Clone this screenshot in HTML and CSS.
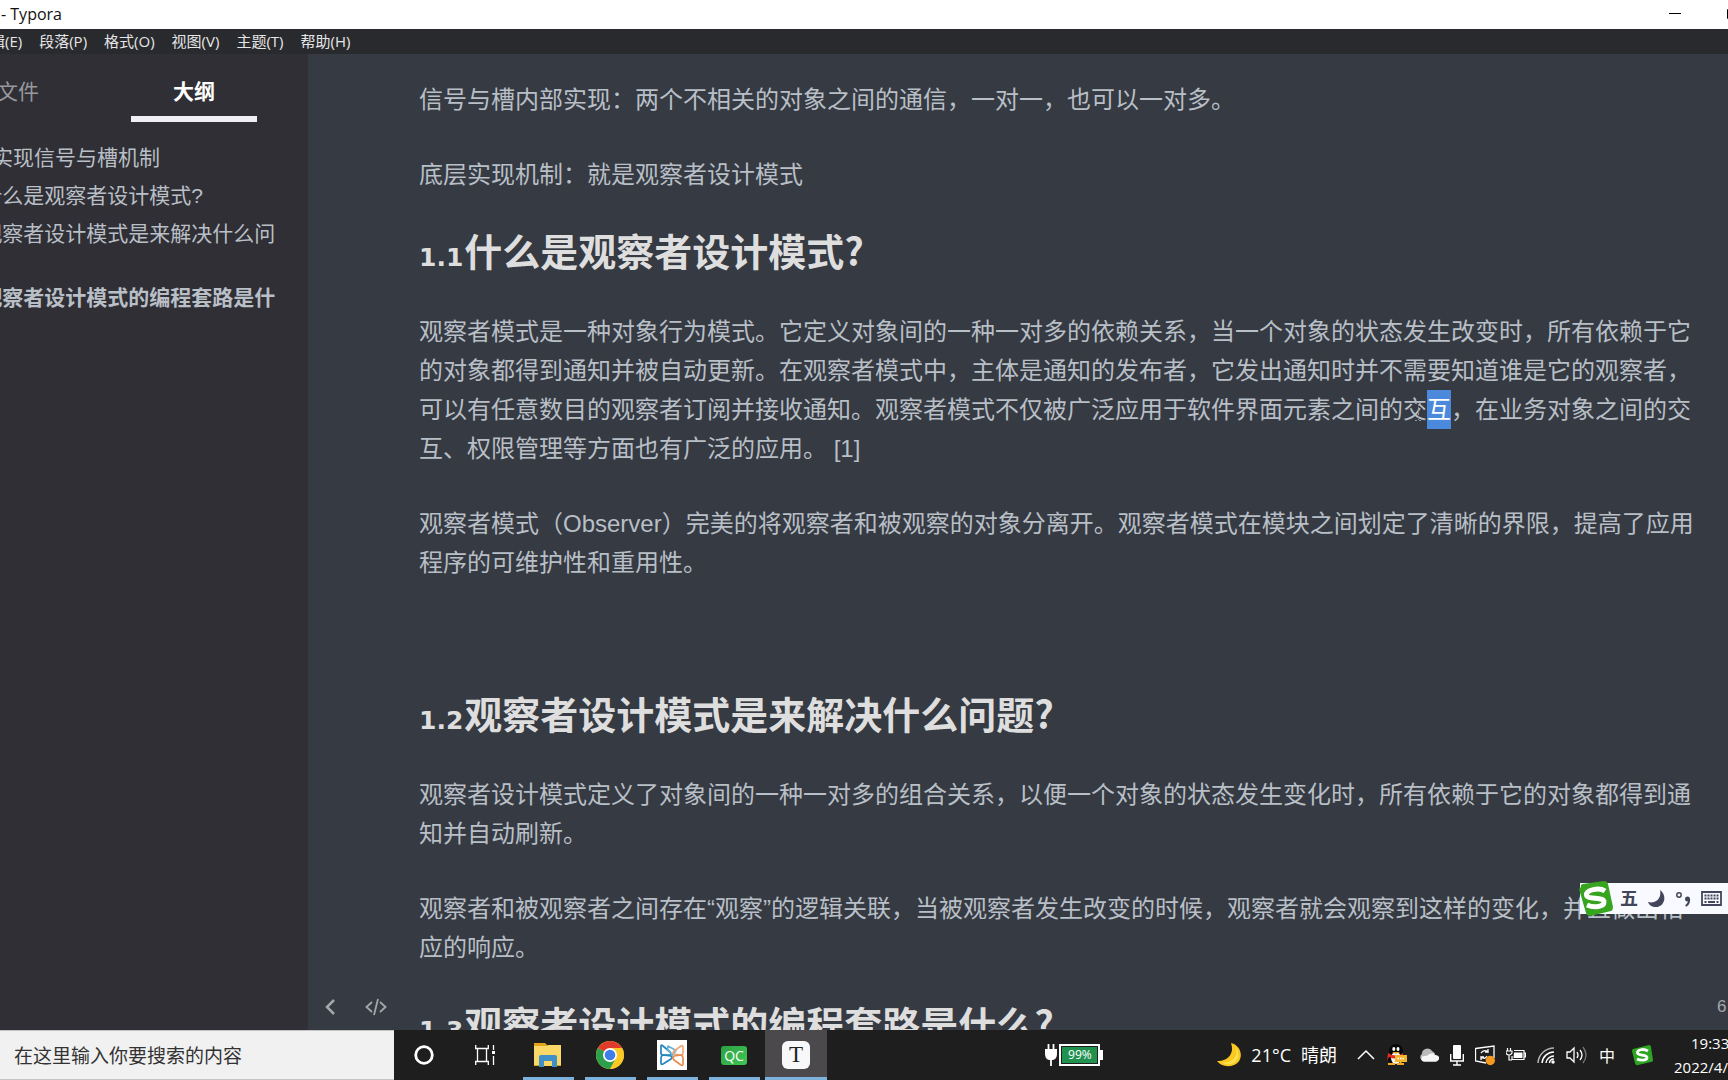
FILE: index.html
```html
<!DOCTYPE html>
<html lang="zh-CN">
<head>
<meta charset="utf-8">
<title>Typora</title>
<link rel="stylesheet" href="styles.css">
</head>
<body>
<div class="desktop">
  <header class="titlebar">
    <span>- Typora</span>
    <div class="window-controls">
      <button class="window-button" aria-label="最小化"><svg width="12" height="12" viewBox="0 0 12 12"><path d="M0 5.5h12" stroke="#000"/></svg></button>
      <button class="window-button" aria-label="最大化"><svg width="12" height="12" viewBox="0 0 12 12"><path d="M.5 1.5h10v9H.5z" fill="none" stroke="#000"/></svg></button>
    </div>
  </header>
  <nav class="menubar">
    <button>编辑(E)</button><button>段落(P)</button><button>格式(O)</button><button>视图(V)</button><button>主题(T)</button><button>帮助(H)</button>
  </nav>
  <div class="workspace">
    <aside class="sidebar">
      <div class="tabs">
        <button class="tab">文件</button>
        <button class="tab tab-active">大纲</button>
      </div>
      <nav class="outline">
        <a class="outline-root" href="#signal">实现信号与槽机制</a>
        <a href="#s11">1.1什么是观察者设计模式?</a>
        <a href="#s12">1.2观察者设计模式是来解决什么问题?</a>
        <a class="outline-current" href="#s13">1.3观察者设计模式的编程套路是什么?</a>
      </nav>
    </aside>
    <main class="editor">
      <article class="document">
        <p id="signal">信号与槽内部实现：两个不相关的对象之间的通信，一对一，也可以一对多。</p>
        <p>底层实现机制：就是观察者设计模式</p>
        <h2 id="s11"><span class="number">1.1</span>什么是观察者设计模式?</h2>
        <p>观察者模式是一种对象行为模式。它定义对象间的一种一对多的依赖关系，当一个对象的状态发生改变时，所有依赖于它的对象都得到通知并被自动更新。在观察者模式中，主体是通知的发布者，它发出通知时并不需要知道谁是它的观察者，可以有任意数目的观察者订阅并接收通知。观察者模式不仅被广泛应用于软件界面元素之间的交<mark>互</mark>，在业务对象之间的交互、权限管理等方面也有广泛的应用。 [1]</p>
        <p>观察者模式（Observer）完美的将观察者和被观察的对象分离开。观察者模式在模块之间划定了清晰的界限，提高了应用程序的可维护性和重用性。</p>
        <p class="blank"></p>
        <h2 id="s12"><span class="number">1.2</span>观察者设计模式是来解决什么问题?</h2>
        <p>观察者设计模式定义了对象间的一种一对多的组合关系，以便一个对象的状态发生变化时，所有依赖于它的对象都得到通知并自动刷新。</p>
        <p>观察者和被观察者之间存在“观察”的逻辑关联，当被观察者发生改变的时候，观察者就会观察到这样的变化，并且做出相应的响应。</p>
        <h2 id="s13"><span class="number">1.3</span>观察者设计模式的编程套路是什么?</h2>
      </article>
      <div class="statusbar">
        <button aria-label="收起侧边栏"><svg width="12" height="16" viewBox="0 0 12 16"><path d="M10 1 3 8l7 7" fill="none" stroke="#a3a8ad" stroke-width="2.5"/></svg></button>
        <button aria-label="源代码模式"><svg width="22" height="18" viewBox="0 0 22 18"><path d="M7 4 1.500 9 7 14M15 4l5.500 5-5.500 5M13 1 9 17" fill="none" stroke="#a3a8ad" stroke-width="1.800"/></svg></button>
        <span class="word-count">6</span>
      </div>
      <div class="ime">
        <svg class="ime-logo" width="38" height="36" viewBox="0 0 38 36"><path d="M4 6Q3 4 6 3L27 0Q30 0 31 3L36 26Q36 29 34 30L13 35Q10 35 9 32L2 8Z" fill="#36a41e"/><path d="M28 10C22 6 9 9 9.500 14 10 19 27 15.500 27 21 27 26 17 27 10 24" fill="none" stroke="#fff" stroke-width="5"/></svg>
        <span class="ime-mode">五</span>
        <svg width="18" height="18" viewBox="0 0 18 18"><path d="M12 0C20 6 16 17 8 17 4 17 1 15 0 12 7 14 14 9 12 0Z" fill="#43465a"/></svg>
        <svg width="15" height="16" viewBox="0 0 15 16"><circle cx="3" cy="4" r="2.200" fill="none" stroke="#43465a" stroke-width="1.500"/><circle cx="11.500" cy="8" r="2.500" fill="#43465a"/><path d="M13.200 8q0 5-3.500 7" fill="none" stroke="#43465a" stroke-width="2"/></svg>
        <svg width="21" height="15" viewBox="0 0 21 15"><path d="M1 1h19v13H1z" fill="none" stroke="#43465a" stroke-width="1.800"/><path d="M3.500 4.500h14M3.500 7.500h14" stroke="#43465a" stroke-width="2" stroke-dasharray="2 1"/><path d="M3.500 11h2M7 11h7M15.500 11h2" stroke="#43465a" stroke-width="2"/></svg>
      </div>
      <svg class="caret" width="7" height="18" viewBox="0 0 7 18"><path d="M0 .5h3M4 .5h3M3.500 1v16M0 17.500h3M4 17.500h3" stroke="#8f969d" stroke-dasharray="2 1"/></svg>
    </main>
  </div>
  <footer class="taskbar">
    <input class="search" type="text" placeholder="在这里输入你要搜索的内容" aria-label="搜索">
    <button class="task cortana" aria-label="Cortana"><svg width="22" height="22" viewBox="0 0 22 22"><circle cx="11" cy="11" r="8.300" fill="none" stroke="#fff" stroke-width="2.800"/></svg></button>
    <button class="task taskview" aria-label="任务视图"><svg width="21" height="20" viewBox="0 0 21 20"><path d="M.7 0v3.500h12.600V0M.7 20v-3.500h12.600V20M2.500 3.500v13M11.500 3.500v13M18.500 0v5M18.500 11v9" fill="none" stroke="#fff" stroke-width="1.300"/><path d="M17 6h3v3h-3z" fill="#fff"/></svg></button>
    <button class="task running" aria-label="文件资源管理器"><svg width="28" height="26" viewBox="0 0 28 26"><path d="M0 1h11l3 3H0z" fill="#e2a61b"/><path d="M0 4h13l1-1h13v21H0z" fill="#f9d868"/><path d="M5 25V15q0-2 2-2h14q2 0 2 2v10h-5v-6h-8v6z" fill="#3f8fc9"/><path d="M0 23h5v1H0zM23 23h4v1h-4z" fill="#e2a61b"/></svg></button>
    <button class="task running" aria-label="Chrome"><svg width="28" height="28" viewBox="0 0 28 28"><circle cx="14" cy="14" r="14" fill="#fbc926"/><path d="M14 14 1.900 7A14 14 0 0 1 26.100 7z" fill="#df3b2d"/><path d="M14 14 1.900 7A14 14 0 0 0 14 28l6-10.500z" fill="#2b9f4c"/><path d="M14 7h12.100A14 14 0 0 1 14 28l6-10.500z" fill="#fbc926"/><circle cx="14" cy="14" r="7" fill="#fff"/><circle cx="14" cy="14" r="5.300" fill="#3f7de8"/></svg></button>
    <button class="task running" aria-label="VMware"><svg width="30" height="30" viewBox="0 0 30 30"><path d="M0 0h30v30H0z" fill="#fff"/><g fill="none" stroke-width="1.700" stroke-linejoin="round"><path d="M4 6Q4 4 6 6l7 6q2 2 0 3H6q-2 0-2-2z" stroke="#2484bd"/><path d="M4 18q0-2 2-3l8 1q2 1 0 3l-8 5q-2 1-2-1z" stroke="#2484bd"/><path d="M11 6 19 10.500 15.500 15 10.500 10z" stroke="#65b3d8"/><path d="M26 7q0-2-2-1l-7 5q-2 2 0 3l7 1q2 0 2-2z" stroke="#f0a878"/><path d="M26 18q0-2-2-3l-7 1q-2 2 0 4l7 5q2 1 2-1z" stroke="#e98b4c"/></g></svg></button>
    <button class="task running" aria-label="Qt Creator"><span class="qc">QC</span></button>
    <button class="task running task-active" aria-label="Typora"><span class="typora">T</span></button>

    <div class="power">
      <svg width="12" height="22" viewBox="0 0 12 22"><path d="M3.500 0v6M8.500 0v6M6 14v8" stroke="#fff" stroke-width="1.800"/><path d="M0 5h12v5q0 5-4 6H4q-4-1-4-6z" fill="#fff"/></svg>
      <span class="charge">99%</span>
    </div>
    <div class="weather">
      <svg width="24" height="24" viewBox="0 0 24 24"><path d="M14 0C26 3 27 18 17 22 10 25 3 22 0 18 10 19 18 11 14 0Z" fill="#fbc81f"/><path d="M17 3C24 12 14 22 4 19 14 27 29 14 17 3Z" fill="#ffe04f"/></svg>
      <span>21°C</span><span>晴朗</span>
    </div>
    <div class="tray">
      <svg width="18" height="12" viewBox="0 0 18 12"><path d="m1 10 8-8 8 8" fill="none" stroke="#fff" stroke-width="1.500"/></svg>
      <svg width="22" height="22" viewBox="0 0 22 22"><ellipse cx="10" cy="7" rx="7" ry="7" fill="#080808"/><ellipse cx="9.500" cy="14" rx="8" ry="6" fill="#080808"/><ellipse cx="10" cy="14" rx="5" ry="6" fill="#f4f4f4"/><path d="M2 9q8 5 15 0v4q-8 3-14 0l-2 4z" fill="#df2c24"/><ellipse cx="7.800" cy="5" rx="1.500" ry="2" fill="#fff"/><ellipse cx="12" cy="5" rx="1.500" ry="2" fill="#fff"/><path d="M6 8h8l-4 2z" fill="#f4a91d"/><path d="M2 19h7v2H2zM11 19h7v2h-7z" fill="#f4a91d"/><path d="M9 11h12v7h-5l-2 2v-2H9z" fill="#f7b52c"/><path d="M11.500 14.500h7" stroke="#fff" stroke-width="1.500" stroke-dasharray="1.500 1"/></svg>
      <svg width="20" height="14" viewBox="0 0 21 14"><path d="M4 13a4 4 0 0 1-1-7A6 6 0 0 1 14 3a6 6 0 0 1 3 3L5 13z" fill="#b9b9b9"/><path d="M5 14a3 3 0 0 1 1-6q3 0 5-2 4-2 6 1c6 0 5 7 0 7z" fill="#f5f5f5"/></svg>
      <svg width="14" height="21" viewBox="0 0 14 21"><rect x="3" y="0" width="8" height="14" rx="1" fill="#fff"/><path d="M.7 9v7h12.600V9M7 16v4M3 20h8" fill="none" stroke="#fff" stroke-width="1.400"/></svg>
      <svg width="20" height="22" viewBox="1 0 20 22"><path d="M1.500 4.500 20 2v12M1.500 4v13l10.500 2" fill="none" stroke="#fff" stroke-width="1.300"/><path d="M7 9q3-4 7-1V5M14 8h-3M13 12q-2 4-6 1v3M7 13h3" fill="none" stroke="#fff" stroke-width="1.300"/><circle cx="16.300" cy="16.500" r="4.700" fill="#f6991f"/></svg>
      <svg width="20" height="14" viewBox="0 0 20 14"><path d="M1.500 0v3M4.500 0v3M0 3h6v2q-1 2-3 2-2 0-3-2zM3 7v5h3M8 2.500h10v9H6V8M18 5h1.500v4H18" fill="none" stroke="#fff" stroke-width="1.200"/><path d="M8 4.500h8.500V10H7.500z" fill="#fff"/></svg>
      <svg width="18" height="18" viewBox="0 0 18 18"><g fill="none" stroke-width="1.500"><path d="M1 17A16 16 0 0 1 17 2" stroke="#b5b5b5"/><path d="M5 17A12 12 0 0 1 17 6M9 17a8 8 0 0 1 8-7M12.500 17a4 4 0 0 1 4.500-4" stroke="#fff"/></g><circle cx="16" cy="16" r="1.700" fill="#fff"/></svg>
      <svg width="22" height="18" viewBox="0 0 22 18"><path d="M1 6h3l4-4v14l-4-4H1z" fill="none" stroke="#fff" stroke-width="1.300"/><path d="M11 6q2 3 0 6M14 4q4 5 0 10" fill="none" stroke="#fff" stroke-width="1.300"/><path d="M17 1q6 8 0 16" fill="none" stroke="#777" stroke-width="1.300"/></svg>
      <span class="input-mode">中</span>
      <svg class="sogou" width="21" height="21" viewBox="0 0 21 21"><path d="M1 4 17 0q2 0 2 2l2 13q0 2-2 2L6 20q-2 1-3-2L0 6q0-1 1-2z" fill="#2da522"/><path d="M16 6C11 3 5 5 5.500 8 6 11 15 9 15 12.500 15 15.500 9 16 5 14" fill="none" stroke="#fff" stroke-width="2.800"/></svg>
    </div>
    <div class="clock"><span class="time">19:33</span><span>2022/4/</span></div>
  </footer>
</div>
</body>
</html>
```
FILE: styles.css
```css
* { box-sizing: border-box; }

body {
  margin: 0;
  overflow: hidden;
  font-family: "Liberation Sans", "Noto Sans CJK SC", sans-serif;
}

button {
  margin: 0;
  padding: 0;
  border: 0;
  background: none;
  color: inherit;
  font: inherit;
}

svg { display: block; flex: none; }

.desktop {
  display: flex;
  flex-direction: column;
  height: 100vh;
  overflow: hidden;
}

.titlebar {
  display: flex;
  flex: none;
  align-items: center;
  justify-content: space-between;
  height: 29px;
  padding: 0 0 2px 1px;
  background: #fff;
  color: #111;
  font: 16px/26px "Open Sans", "Noto Sans CJK SC", sans-serif;
}

.window-controls {
  display: flex;
  gap: 46px;
  margin-right: -11px;
}

.menubar {
  display: flex;
  flex: none;
  gap: 17px;
  height: 25px;
  margin-left: -25px;
  background: #292a2d;
  color: #e6e6e8;
  font: 15px/25px "Open Sans", "Noto Sans CJK SC", sans-serif;
}

.menubar button { white-space: nowrap; }

.workspace {
  display: flex;
  flex: 1;
  min-height: 0;
}

.sidebar {
  flex: none;
  width: 404px;
  margin-left: -96px;
  background: #302f35;
  color: #b8bfc6;
  font-size: 21px;
}

.tabs {
  display: flex;
  padding: 8px 26px 0;
}

.tab {
  flex: 1;
  margin: 0 25px;
  padding-top: 6px;
  height: 60px;
  border-bottom: 6px solid transparent;
  color: #98989d;
  line-height: 48px;
}

.tab-active {
  border-color: #efeff4;
  color: #fff;
  font-weight: bold;
}

.outline {
  display: flex;
  flex-direction: column;
  padding: 17px 26px 0 48px;
}

.outline a {
  padding: 6px 0;
  color: inherit;
  line-height: 26px;
  text-decoration: none;
}

.outline .outline-root { padding-left: 40px; }

.outline-current { font-weight: bold; }

.editor {
  position: relative;
  flex: 1;
  min-width: 0;
  overflow: hidden;
  background: #363a42;
  color: #b8bfc6;
}

.document {
  padding: 26px 29px 0 111px;
  font-size: 24px;
  line-height: 39px;
}

.document p { margin: 0 0 36px; }

.blank { height: 39px; }

.document h2 {
  margin: 0 0 42px;
  color: #dedede;
  font: bold 38px/39px "Noto Sans CJK SC", sans-serif;
}

.number {
  margin-right: 1px;
  font-family: "DejaVu Sans", sans-serif;
  font-size: 25px;
  line-height: 25px;
}

mark {
  display: inline-block;
  background: #4a89dc;
  color: #fff;
}

.statusbar {
  position: absolute;
  right: 0;
  bottom: 10px;
  left: 0;
  display: flex;
  align-items: center;
  gap: 29px;
  height: 26px;
  padding-left: 16px;
  color: #a3a8ad;
  font-size: 17px;
}

.word-count {
  width: 11px;
  margin-left: auto;
}

.ime {
  position: absolute;
  right: 0;
  bottom: 116px;
  display: flex;
  align-items: center;
  gap: 10px;
  height: 31px;
  padding-right: 6px;
  background: #f9faff;
}

.ime-logo { margin: 0 -5px 0 -3px; }

.ime-mode {
  width: 18px;
  color: #43465a;
  font: bold 18px/26px "Noto Sans CJK SC", sans-serif;
  padding-bottom: 3px;
}

.caret {
  position: absolute;
  top: 349px;
  right: 306px;
}

.taskbar {
  display: flex;
  flex: none;
  align-items: center;
  height: 50px;
  background: #1e1e1e;
  color: #fff;
}

.search {
  width: 394px;
  height: 50px;
  padding: 0 14px 2px;
  border: solid #c4c4c4;
  border-width: 1px 0;
  border-radius: 0;
  background: #f1f1f1;
  font: 19px "Noto Sans CJK SC", sans-serif;
}

.search::placeholder { color: #333; }

.task {
  display: flex;
  flex: none;
  align-items: center;
  justify-content: center;
  position: relative;
  width: 62px;
  height: 50px;
}

.cortana { width: 60px; }

.taskview { width: 63px; }

.running::after {
  content: "";
  position: absolute;
  right: 5px;
  bottom: 0;
  left: 6px;
  height: 3px;
  background: #7db2dc;
}

.task-active { background: #4b494b; }

.task-active::after { right: 0; left: 0; }

.qc {
  width: 26px;
  border-radius: 3px;
  background: linear-gradient(135deg, #2da044, #40c653);
  font: 14px/19px "Open Sans", sans-serif;
}

.typora {
  width: 28px;
  border-radius: 6px;
  background: #f8f8fa;
  color: #222;
  font: 23px/28px "Liberation Serif", serif;
}

.power {
  display: flex;
  align-items: center;
  gap: 2px;
  margin-left: auto;
}

.charge {
  position: relative;
  width: 41px;
  height: 22px;
  border: 2px solid #fff;
  outline: 1px solid #1e1e1e;
  outline-offset: -3px;
  background: #219150;
  font: 12px/18px "Open Sans", sans-serif;
  text-align: center;
}

.charge::after {
  content: "";
  position: absolute;
  top: 4px;
  right: -5px;
  width: 3px;
  height: 10px;
  background: #fff;
}

.weather {
  display: flex;
  align-items: center;
  gap: 10px;
  margin: 0 20px 0 117px;
  font: 18px/26px "Open Sans", "Noto Sans CJK SC", sans-serif;
}

.tray {
  display: flex;
  align-items: center;
  gap: 11px;
}

.input-mode { font: 16px/24px "Noto Sans CJK SC", sans-serif; }

.sogou { margin-left: 6px; }

.clock {
  display: flex;
  flex-direction: column;
  width: 54px;
  margin-left: 21px;
  overflow: hidden;
  font: 15px/24px "Open Sans", sans-serif;
  white-space: nowrap;
}

.time { padding-left: 17px; }
```
